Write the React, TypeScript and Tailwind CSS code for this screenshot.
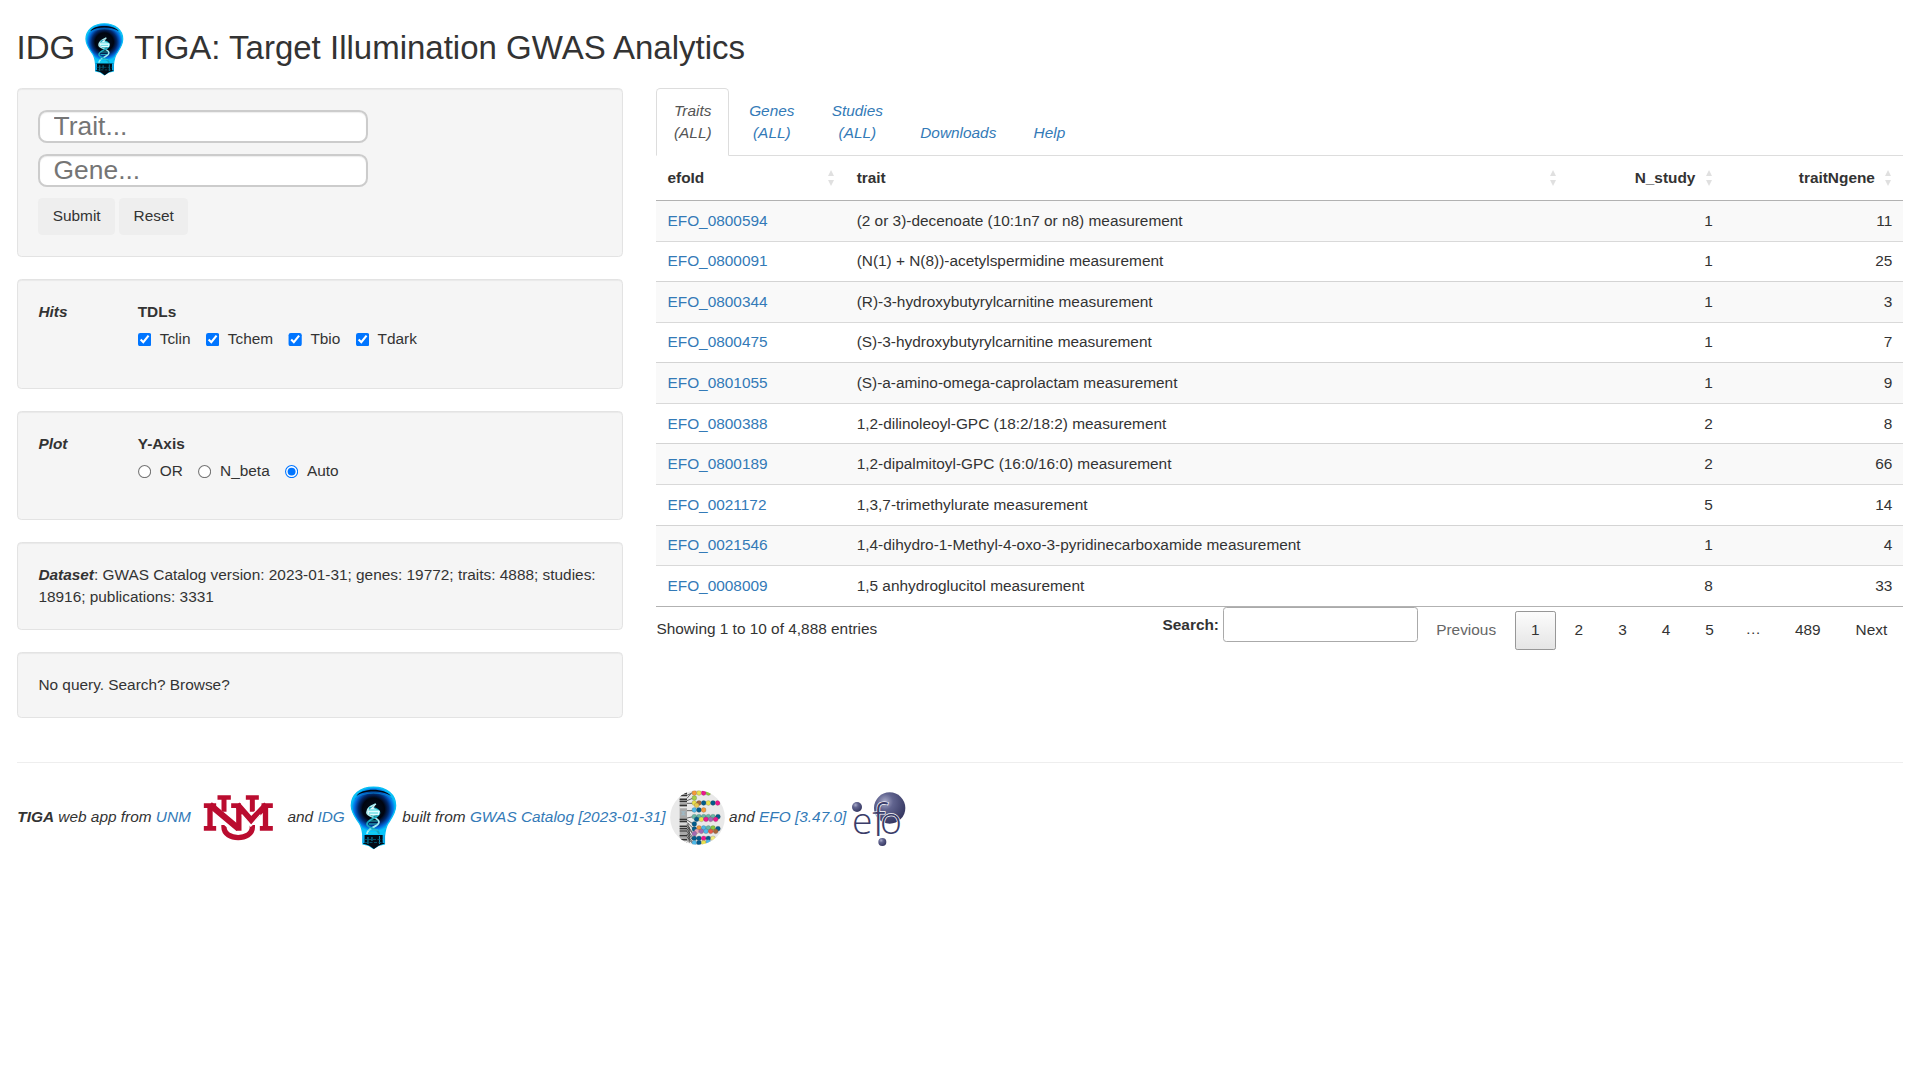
import type { ReactNode } from "react";

const traits: [string, string, number, number][] = [
  ["EFO_0800594", "(2 or 3)-decenoate (10:1n7 or n8) measurement", 1, 11],
  ["EFO_0800091", "(N(1) + N(8))-acetylspermidine measurement", 1, 25],
  ["EFO_0800344", "(R)-3-hydroxybutyrylcarnitine measurement", 1, 3],
  ["EFO_0800475", "(S)-3-hydroxybutyrylcarnitine measurement", 1, 7],
  ["EFO_0801055", "(S)-a-amino-omega-caprolactam measurement", 1, 9],
  ["EFO_0800388", "1,2-dilinoleoyl-GPC (18:2/18:2) measurement", 2, 8],
  ["EFO_0800189", "1,2-dipalmitoyl-GPC (16:0/16:0) measurement", 2, 66],
  ["EFO_0021172", "1,3,7-trimethylurate measurement", 5, 14],
  ["EFO_0021546", "1,4-dihydro-1-Methyl-4-oxo-3-pyridinecarboxamide measurement", 1, 4],
  ["EFO_0008009", "1,5 anhydroglucitol measurement", 8, 33],
];

function Bulb({ className, id }: { className: string; id: string }) {
  return (
    <svg viewBox="0 0 49 66" className={className}>
      <defs>
        <radialGradient id={id} gradientUnits="userSpaceOnUse" cx="24.5" cy="24" r="24.5">
          <stop offset="0" stopColor="#03101c" />
          <stop offset="0.45" stopColor="#000510" />
          <stop offset="0.62" stopColor="#01286b" />
          <stop offset="0.78" stopColor="#026be0" />
          <stop offset="0.92" stopColor="#06c5fb" />
        </radialGradient>
      </defs>
      <path
        d="M24.5 2C11 2 2.3 10 2.3 20.500C2.300 28 7 33 10.500 38.500C13.300 43 13.600 47 14 51.500V59L20 60.500L24.500 63.500L29.500 60.500L35.500 59V51.500C36 47 36.300 43 39 38.500C42.500 33 46.700 28 46.700 20.500C46.700 10 38 2 24.500 2Z"
        fill={`url(#${id})`}
        stroke="#08bff5"
        strokeWidth="1.300"
      />
      <path d="M7.500 11C12 2.500 36 2.500 42 11C36 7.500 31 6.500 24.500 6.500C18 6.500 13 7.500 7.500 11Z" fill="#000814" />
      <path d="M6 14C13 6 36 6 43 14" fill="none" stroke="#0783d0" strokeWidth="0.800" />
      <path d="M14 50H35.500V58.500L30 60.500L25 64L20 60.500L14 58.500Z" fill="#010b16" />
      <path d="M14.500 50V58M34.800 50V58" stroke="#0aaef0" strokeWidth="2.200" />
      <path d="M19 52V59M30.500 51V59M23 52V56" stroke="#0892b8" strokeWidth="1" />
      <path d="M15 54.500H34M16 57.500H33" stroke="#06637f" strokeWidth="0.800" strokeDasharray="3 1.500" />
      <path d="M27 19C23 21 18 22.500 18 27.500C18 32 30 32 30 37C30 42 18 42.500 18 49" fill="none" stroke="#a9eef2" strokeWidth="1.800" />
      <path d="M20 23C26 22 30.500 25 30.500 28C30.500 33 18 34 18 39C18 44 30 43 30 49" fill="none" stroke="#18a7bd" strokeWidth="1.800" />
      <path d="M18.500 26L27 19L24.500 23L31 26L30 30L24 31L19 29Z" fill="#dffcff" />
      <path d="M20 25H29M20 28H29M22 31H27M20 36H29M20 39H28M19 45H29M19 48H28" stroke="#2ed2d8" strokeWidth="0.900" />
    </svg>
  );
}

function UnmLogo() {
  return (
    <svg viewBox="585.500 45 264 198" className="h-[60px] w-20">
      <g fill="none" stroke="#ba0c2f">
        <path d="M672.500 165V172C672.500 213 757.500 213 757.500 172V165" strokeWidth="16" />
        <path d="M672.500 84V125M757.500 84V125" strokeWidth="15" />
        <path d="M653 82.500H693M738 82.500H777" strokeWidth="13" />
      </g>
      <g fill="none" stroke="#fff" strokeWidth="27">
        <path d="M628 108L706 176M710 108L753 152L803 106" />
      </g>
      <g fill="none" stroke="#ba0c2f">
        <path d="M612 107H649M694 107H723M785 107H819M612 175H649M780 175H819" strokeWidth="14" />
        <path d="M630.500 107V175M717 107V182M797 107V175" strokeWidth="16" />
        <path d="M630 104L716 176M712 104L754 152L800 104" strokeWidth="19" />
      </g>
      <path d="M726 134L754 166L782 134" fill="none" stroke="#fff" strokeWidth="4" />
    </svg>
  );
}

const beads: [number, number, string][] = [
  [73, 9, "#f39a3c"], [87, 9, "#e8e04e"], [101, 9, "#ec178c"], [115, 9, "#8cc63f"],
  [73, 24, "#a2cf4a"], [73, 39, "#e8e04e"], [87, 39, "#a8673c"], [101, 39, "#045b8c"], [115, 39, "#e8e04e"], [129, 39, "#045b8c"], [143, 39, "#ec178c"],
  [80, 46, "#e8c84e"], [73, 60, "#4db8e8"], [87, 60, "#045b8c"], [101, 60, "#f39a3c"],
  [73, 80, "#66b8a6"], [87, 80, "#66b8a6"], [101, 80, "#66b8a6"], [115, 80, "#66b8a6"], [129, 80, "#66b8a6"], [144, 80, "#045b8c"],
  [80, 88, "#045b8c"], [94, 88, "#e8e04e"], [108, 88, "#ec178c"], [122, 88, "#a468b0"], [137, 88, "#ec178c"], [73, 102, "#045b8c"],
  [73, 117, "#045b8c"], [87, 114, "#f39a3c"], [101, 114, "#4db8e8"], [115, 114, "#66b8a6"], [129, 114, "#8cc63f"], [144, 116, "#045b8c"],
  [80, 124, "#e8a0b8"], [94, 124, "#a468b0"], [108, 124, "#4db8e8"], [122, 124, "#e85848"], [137, 124, "#a8673c"], [73, 131, "#a468b0"],
  [73, 145, "#045b8c"], [87, 145, "#045b8c"], [101, 145, "#ec178c"], [115, 145, "#045b8c"], [129, 145, "#f0ec80"],
  [73, 158, "#4db8e8"], [87, 158, "#045b8c"], [101, 158, "#e8e04e"], [115, 156, "#4db8e8"],
];

function CatalogLogo() {
  return (
    <svg viewBox="0 0 165 165" className="mb-[1.800px] size-[50px]">
      <defs>
        <clipPath id="catalog-disc">
          <circle cx="82.500" cy="82.500" r="82" />
        </clipPath>
      </defs>
      <g clipPath="url(#catalog-disc)">
        <rect width="165" height="165" fill="#e9e9e9" />
        <rect x="29" y="4" width="22" height="157" fill="#a8a8a8" />
        <path d="M29 10H51M29 16H51M29 28H51M29 34H51M29 46H51M29 88H51M29 94H51M29 109H51M29 116H51M29 123H51M29 137H51M29 149H51" stroke="#333" strokeWidth="3.500" />
        <path d="M29 22H51M29 53H51M29 102H51M29 155H51" stroke="#e6e6e6" strokeWidth="4" />
        <path d="M32 64H48L42 70L48 76H32L38 70Z" fill="#9fb8c4" />
        <path d="M51 16L70 7M51 25L62 12M51 32L70 24M51 40H70M51 62H70M51 84L70 80M51 90L70 102M51 97L70 116M51 103L66 126M51 110L68 131M51 116L69 145M51 124L68 150M51 132L68 158M51 140L65 158M54 100V155M58 110V158" fill="none" stroke="#222" strokeWidth="2" />
        <path d="M73 39H143M73 60H101M73 80H144M73 117H144M73 145H129" stroke="#333" strokeWidth="1.500" />
        {beads.map(([x, y, fill], i) => (
          <circle key={i} cx={x} cy={y} r="7.300" fill={fill} stroke="#444" strokeWidth="0.600" />
        ))}
      </g>
    </svg>
  );
}

function EfoLogo() {
  return (
    <svg viewBox="0 0 165 165" className="size-[50px] overflow-visible not-italic">
      <defs>
        <radialGradient id="efo-ball" cx="0.350" cy="0.300" r="0.750">
          <stop offset="0" stopColor="#a9abc9" />
          <stop offset="0.350" stopColor="#61648f" />
          <stop offset="1" stopColor="#33355f" />
        </radialGradient>
      </defs>
      <circle cx="116" cy="51" r="47" fill="url(#efo-ball)" />
      <circle cx="18" cy="48" r="15" fill="url(#efo-ball)" />
      <circle cx="94" cy="153" r="12" fill="url(#efo-ball)" />
      <text y="129" fontFamily="'Open Sans', 'Noto Sans', sans-serif" fontWeight="300" fontSize="112" fill="#3b3d69" stroke="#fff" strokeWidth="4" paintOrder="stroke">
        <tspan x="3">e</tspan>
        <tspan x="64" dy="7" fontSize="132">f</tspan>
        <tspan x="87" dy="-7">o</tspan>
      </text>
    </svg>
  );
}

function Well({ className, children }: { className: string; children: ReactNode }) {
  return (
    <div className={`mb-5 rounded border border-[#e3e3e3] bg-[#f5f5f5] p-[19px] shadow-[inset_0_1px_1px_rgba(0,0,0,0.05)] ${className}`}>
      {children}
    </div>
  );
}

function Options({ title, heading, type, options }: { title: string; heading: string; type: "checkbox" | "radio"; options: [string, boolean][] }) {
  return (
    <div className="flex items-start">
      <b className="w-[90.300px] italic">{title}</b>
      <div>
        <b className="mb-[4.300px] block">{heading}</b>
        <div className="flex gap-[13.900px]">
          {options.map(([label, checked]) => (
            <label key={label} className="flex gap-[7px]">
              <input type={type} defaultChecked={checked} name={type === "radio" ? heading : label} className="mt-[4.500px] size-[13px]" />
              {label}
            </label>
          ))}
        </div>
      </div>
    </div>
  );
}

function HeaderCell({ children, right }: { children: string; right?: boolean }) {
  return (
    <th className={`border-b border-black/30 py-2.5 pl-2.5 ${right ? "text-right" : "text-left"}`}>
      <div className={`flex items-center pr-[11px] ${right ? "justify-end gap-[9.300px]" : "justify-between"}`}>
        <span>{children}</span>
        <svg viewBox="0 0 6 16" className="h-[14.500px] w-[5.500px]" fill="#e0e0e0">
          <path d="M3 0L6 6H0ZM3 16L6 10H0Z" />
        </svg>
      </div>
    </th>
  );
}

function PageButton({ children, className = "border-transparent" }: { children: string; className?: string }) {
  return <a className={`ml-0.5 rounded-[2px] border px-[14px] py-[7px] ${className}`}>{children}</a>;
}

const tab = "mr-0.5 -mb-px border border-transparent px-[15px] py-2.5 text-center text-[#337ab7]";

export default function App() {
  return (
    <div className="pr-[15.200px] pl-[15px] font-['Liberation_Sans',Arial,sans-serif] text-[14px] leading-5 text-[#333] [zoom:1.1]">
      <h2 className="mt-5 mb-2.5 flex h-[50px] items-center gap-[8.400px] text-[30px] leading-[33px] font-medium">
        <span className="pb-[1.800px] font-normal">IDG</span>
        <Bulb id="bulb-title" className="h-[50px] w-[37px]" />
        <span className="pb-[1.800px] font-normal">TIGA: Target Illumination GWAS Analytics</span>
      </h2>

      <div className="grid grid-cols-[551.800px_1fr] gap-[30px]">
        <div>
          <Well className="h-[154px]">
            <div className="flex flex-col gap-2.5">
              {["Trait...", "Gene..."].map((p) => (
                <input
                  key={p}
                  placeholder={p}
                  className="h-[30px] w-[300px] rounded-[8px] border-2 border-[#ccc] bg-white px-3 text-[24px] shadow-[inset_0_1px_1px_rgba(0,0,0,0.075)] placeholder:text-[#757575]"
                />
              ))}
              <div className="flex gap-1">
                <button className="h-[34px] rounded bg-[#eee] px-[13px] pb-[1.800px]">Submit</button>
                <button className="h-[34px] rounded bg-[#eee] px-[13px] pb-[1.800px]">Reset</button>
              </div>
            </div>
          </Well>
          <Well className="h-[100px]">
            <Options title="Hits" heading="TDLs" type="checkbox" options={[["Tclin", true], ["Tchem", true], ["Tbio", true], ["Tdark", true]]} />
          </Well>
          <Well className="h-[99px]">
            <Options title="Plot" heading="Y-Axis" type="radio" options={[["OR", false], ["N_beta", false], ["Auto", true]]} />
          </Well>
          <Well className="h-20">
            <b className="italic">Dataset</b>: GWAS Catalog version: 2023-01-31; genes: 19772; traits: 4888; studies: 18916; publications: 3331
          </Well>
          <Well className="h-[60px]">No query. Search? Browse?</Well>
        </div>

        <div>
          <nav className="flex items-end border-b border-[#ddd] italic">
            <a className="mr-[2.300px] -mb-px rounded-t border border-[#ddd] border-b-white bg-white px-[15px] py-2.5 text-center text-[#555]">
              Traits
              <br />
              (ALL)
            </a>
            <a className={tab}>
              Genes
              <br />
              (ALL)
            </a>
            <a className={tab}>
              Studies
              <br />
              (ALL)
            </a>
            <a className={tab}>Downloads</a>
            <a className={tab}>Help</a>
          </nav>

          <table className="w-full table-fixed border-separate border-spacing-0 border-b border-black/30">
            <colgroup>
              <col className="w-[172px]" />
              <col className="w-[657px]" />
              <col className="w-[141.300px]" />
              <col />
            </colgroup>
            <thead>
              <tr>
                <HeaderCell>efoId</HeaderCell>
                <HeaderCell>trait</HeaderCell>
                <HeaderCell right>N_study</HeaderCell>
                <HeaderCell right>traitNgene</HeaderCell>
              </tr>
            </thead>
            <tbody>
              {traits.map(([id, name, studies, genes]) => (
                <tr key={id} className="odd:bg-[#f9f9f9] *:border-t *:border-black/15 *:px-2.5 *:py-2 first:*:border-t-0">
                  <td className="text-[#337ab7]">{id}</td>
                  <td>{name}</td>
                  <td className="text-right">{studies}</td>
                  <td className="text-right">{genes}</td>
                </tr>
              ))}
            </tbody>
          </table>

          <div className="-mr-[0.300px] flex items-start">
            <div className="grow pt-[10.100px]">Showing 1 to 10 of 4,888 entries</div>
            <label className="flex items-center gap-[3.600px] font-bold">
              <span className="pt-[1px]">Search:</span>
              <input className="h-8 w-[177px] rounded-[3px] border border-[#aaa] bg-transparent p-[5px] font-normal" />
            </label>
            <div className="flex pt-[3.500px]">
              <PageButton className="border-transparent text-[#666]">Previous</PageButton>
              <PageButton className="border-[#979797] bg-linear-to-b from-[#fcfcfc] to-[#e5e5e5]">1</PageButton>
              <PageButton>2</PageButton>
              <PageButton>3</PageButton>
              <PageButton>4</PageButton>
              <PageButton>5</PageButton>
              <span className="px-[14px] py-[7px]">…</span>
              <PageButton>489</PageButton>
              <PageButton>Next</PageButton>
            </div>
          </div>
        </div>
      </div>

      <hr className="my-5 border-t border-[#eee]" />

      <footer className="flex h-[60px] items-center gap-[3.900px] pl-[0.700px] whitespace-nowrap italic *:[span]:pb-[1.600px]">
        <span>
          <b>TIGA</b> web app from <a className="text-[#337ab7]">UNM</a>
        </span>
        <UnmLogo />
        <span>
          and <a className="text-[#337ab7]">IDG</a>
        </span>
        <Bulb id="bulb-footer" className="h-[60px] w-[44.500px]" />
        <span>
          built from <a className="text-[#337ab7]">GWAS Catalog [2023-01-31]</a>
        </span>
        <CatalogLogo />
        <span>
          and <a className="text-[#337ab7]">EFO [3.47.0]</a>
        </span>
        <EfoLogo />
      </footer>
    </div>
  );
}
